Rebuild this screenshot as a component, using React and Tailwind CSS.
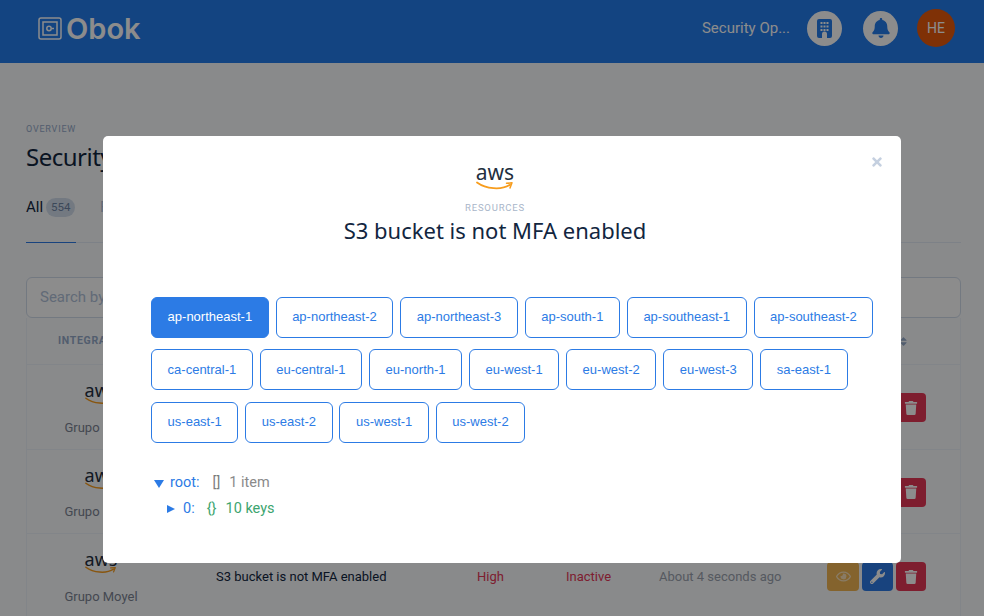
import React from 'react';
import { FaBell, FaRegEye, FaSort, FaTimes, FaTrash, FaWrench } from 'react-icons/fa';

const regions = [
  ['ap-northeast-1', 'ap-northeast-2', 'ap-northeast-3', 'ap-south-1', 'ap-southeast-1', 'ap-southeast-2'],
  ['ca-central-1', 'eu-central-1', 'eu-north-1', 'eu-west-1', 'eu-west-2', 'eu-west-3', 'sa-east-1'],
  ['us-east-1', 'us-east-2', 'us-west-1', 'us-west-2'],
];

const AwsSmile = ({ width }) => (
  <svg width={width} viewBox="0 0 38 10" fill="none">
    <path d="M1 1.5C10 8 25 9.500 34 3.800" stroke="#f79c1c" strokeWidth="1.800" strokeLinecap="round" />
    <path d="M30.500 2.300L36 1.800L34 7" stroke="#f79c1c" strokeWidth="1.500" strokeLinecap="round" strokeLinejoin="round" />
  </svg>
);

const BuildingIcon = () => (
  <svg width="15" height="19" viewBox="0 0 15 19" fill="currentColor">
    <path
      fillRule="evenodd"
      d="M2 0H13A2 2 0 0 1 15 2V17A2 2 0 0 1 13 19H10V15A2.500 2.500 0 0 0 5 15V19H2A2 2 0 0 1 0 17V2A2 2 0 0 1 2 0ZM3.500 3V5H5.500V3ZM6.500 3V5H8.500V3ZM9.500 3V5H11.500V3ZM3.500 6.500V8.500H5.500V6.500ZM6.500 6.500V8.500H8.500V6.500ZM9.500 6.500V8.500H11.500V6.500ZM3.500 10V12H5.500V10ZM6.500 10V12H8.500V10ZM9.500 10V12H11.500V10Z"
    />
  </svg>
);

const Row = () => (
  <div className="flex h-[84.5px] items-center border-b border-[#edf2f9] pt-[2px] text-[13px]">
    <div className="flex w-[148px] flex-col items-center pt-[5px]">
      <span className="font-['Noto_Sans',sans-serif] text-[18px] leading-[14px] text-[#232f3e]">aws</span>
      <AwsSmile width={32} />
      <span className="mt-[12px] text-[#7c8494]">Grupo Moyel</span>
    </div>
    <div className="w-[302px] pl-[41px] text-[#12263f]">S3 bucket is not MFA enabled</div>
    <div className="w-[89px] text-[#e63757]">High</div>
    <div className="w-[93px] text-[#e63757]">Inactive</div>
    <div className="w-[168px] text-[#9ca3af]">About 4 seconds ago</div>
    <div className="flex gap-[3px]">
      <button className="flex h-[29px] w-[32px] items-center justify-center rounded-[4px] bg-[#f0b552] text-white/60"><FaRegEye size={15} /></button>
      <button className="flex h-[29px] w-[31px] items-center justify-center rounded-[4px] bg-[#2c7be5] text-white"><FaWrench size={15} /></button>
      <button className="flex h-[29px] w-[30px] items-center justify-center rounded-[4px] bg-[#e63757] text-white"><FaTrash size={14} /></button>
    </div>
  </div>
);

export default function App() {
  return (
    <div className="relative h-[616px] overflow-hidden bg-[#f9fbfd] font-['Roboto',sans-serif]">
      <header className="flex h-[63px] items-center bg-[#237cec] pb-[7px] pl-[38px] pr-[29px]">
        <svg width="24" height="23" viewBox="0 0 24 23" fill="none" stroke="#fff" strokeWidth="1.500">
          <rect x="1" y="1" width="22" height="21" rx="2" />
          <rect x="5" y="5" width="14" height="13" />
          <circle cx="11" cy="11.500" r="2.200" />
          <path d="M13.500 11.500H16" />
        </svg>
        <span className="ml-[4px] font-['Inter',sans-serif] text-[29px] font-semibold leading-none text-white">Obok</span>
        <span className="ml-auto text-[15px] text-white">Security Op...</span>
        <span className="ml-[17px] flex h-[35px] w-[35px] items-center justify-center rounded-full bg-white text-[#237cec]"><BuildingIcon /></span>
        <span className="ml-[21px] flex h-[35px] w-[35px] items-center justify-center rounded-full bg-white text-[#237cec]"><FaBell size={20} /></span>
        <span className="ml-[19px] flex h-[38px] w-[38px] items-center justify-center rounded-full bg-[#e8590c] text-[14px] text-white">HE</span>
      </header>

      <main className="pl-[26px] pr-[23px] pt-[62px]">
        <div className="text-[9px] uppercase leading-[9px] tracking-[0.8px] text-[#95aac9]">Overview</div>
        <h1 className="mt-[8px] font-['Noto_Sans',sans-serif] text-[24px] leading-[30px] tracking-[-0.5px] text-[#12263f]">Security</h1>
        <div className="mt-[22px] flex h-[49px] items-start border-b border-[#e3ebf6]">
          <div className="flex h-[49px] w-[50px] items-start border-b border-[#2c7be5] pt-[4px]">
            <span className="text-[15px] leading-[18px] text-[#12263f]">All</span>
            <span className="ml-[3px] rounded-full bg-[#d2ddec] px-[5px] text-[11.500px] leading-[19px] text-[#6e84a3]">554</span>
          </div>
          <span className="ml-[24px] pt-[4px] text-[15px] leading-[18px] text-[#b1c2d9]">F</span>
        </div>
        <div className="mt-[34px] flex h-[41px] items-center rounded-[6px] border border-[#d2ddec] bg-white px-[13px] text-[15px] text-[#b1c2d9]">Search by</div>
        <div className="border-l border-r border-[#edf2f9]">
          <div className="flex h-[47px] items-center border-b border-[#edf2f9] bg-[#f9fbfd] pl-[31px]">
            <span className="text-[10.500px] font-bold tracking-[0.7px] text-[#95aac9]">INTEGRATION</span>
            <FaSort size={11} className="ml-auto mr-[51px] text-[#95aac9]" />
          </div>
          <Row />
          <Row />
          <Row />
        </div>
      </main>

      <div className="absolute inset-0 bg-black/45 pl-[103px] pt-[136px]">
        <div className="relative h-[427px] w-[798px] rounded-[5px] bg-white">
          <FaTimes size={14} className="absolute right-[17px] top-[19px] text-[#c5d0e0]" />
          <div className="flex flex-col items-center pr-[14px] pt-[28px]">
            <span className="font-['Noto_Sans',sans-serif] text-[21px] leading-[17px] text-[#232f3e]">aws</span>
            <AwsSmile width={38} />
            <div className="mt-[11px] text-[9.500px] uppercase leading-[11px] tracking-[0.8px] text-[#a9b6c9]">Resources</div>
            <h2 className="mt-[2px] font-['Noto_Sans',sans-serif] text-[22px] leading-[30px] text-[#12263f]">S3 bucket is not MFA enabled</h2>
          </div>
          <div className="mt-[52px] flex flex-col gap-[11.400px] pl-[48px]">
            {regions.map((row) => (
              <div key={row[0]} className="flex gap-[6.800px]">
                {row.map((name) => (
                  <button
                    key={name}
                    className={`h-[41px] rounded-[6px] border border-[#2c7be5] px-[15.600px] pb-[1px] font-['Liberation_Sans',sans-serif] text-[13px] ${
                      name === 'ap-northeast-1' ? 'bg-[#2c7be5] text-white' : 'bg-white text-[#2c7be5]'
                    }`}
                  >
                    {name}
                  </button>
                ))}
              </div>
            ))}
          </div>
          <div className="mt-[27px] text-[14.500px] leading-[26px]">
            <div className="flex items-center pl-[51px]">
              <svg width="10" height="8" viewBox="0 0 10 8" className="mt-[3px]"><path d="M0 0H10L5 8Z" fill="#2c7be5" /></svg>
              <span className="ml-[6px] text-[#2c7be5]">root:</span>
              <span className="ml-[13px] text-[#7d7d7d]">[]</span>
              <span className="ml-[9px] text-[#8a8a8a]">1 item</span>
            </div>
            <div className="flex items-center pl-[64px]">
              <svg width="8" height="8" viewBox="0 0 8 8"><path d="M0 0L8 4L0 8Z" fill="#2c7be5" /></svg>
              <span className="ml-[8px] text-[#2c7be5]">0:</span>
              <span className="ml-[12px] text-[#3da56f]">{'{}'}</span>
              <span className="ml-[9px] text-[#3da56f]">10 keys</span>
            </div>
          </div>
        </div>
      </div>
    </div>
  );
}
